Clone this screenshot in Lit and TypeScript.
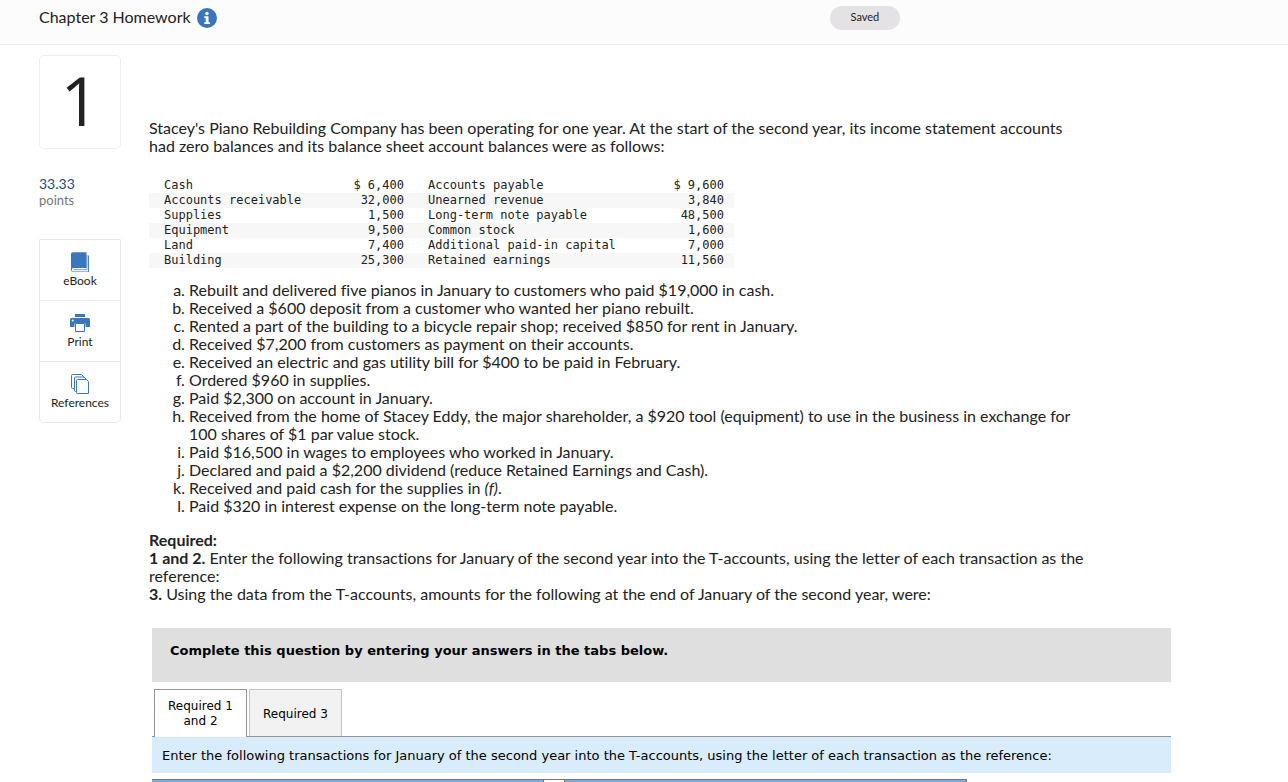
import { LitElement, html, css, svg } from "lit";
import { customElement, property, state } from "lit/decorators.js";
import { classMap } from "lit/directives/class-map.js";

const balances = [
  ["Cash", "$ 6,400", "Accounts payable", "$ 9,600"],
  ["Accounts receivable", "32,000", "Unearned revenue", "3,840"],
  ["Supplies", "1,500", "Long-term note payable", "48,500"],
  ["Equipment", "9,500", "Common stock", "1,600"],
  ["Land", "7,400", "Additional paid-in capital", "7,000"],
  ["Building", "25,300", "Retained earnings", "11,560"],
];

const events = [
  "Rebuilt and delivered five pianos in January to customers who paid $19,000 in cash.",
  "Received a $600 deposit from a customer who wanted her piano rebuilt.",
  "Rented a part of the building to a bicycle repair shop; received $850 for rent in January.",
  "Received $7,200 from customers as payment on their accounts.",
  "Received an electric and gas utility bill for $400 to be paid in February.",
  "Ordered $960 in supplies.",
  "Paid $2,300 on account in January.",
  "Received from the home of Stacey Eddy, the major shareholder, a $920 tool (equipment) to use in the business in exchange for 100 shares of $1 par value stock.",
  "Paid $16,500 in wages to employees who worked in January.",
  "Declared and paid a $2,200 dividend (reduce Retained Earnings and Cash).",
  html`Received and paid cash for the supplies in <i>(f)</i>.`,
  "Paid $320 in interest expense on the long-term note payable.",
];

const bookIcon = svg`
  <path d="M3 .2h13.500v15.800H3.200a1.800 1.800 0 0 0 0 3.500h14.800V3.500h.9v16.500H3.200A2.400 2.400 0 0 1 1 18V2.200a2 2 0 0 1 2-2z" fill="#3a76bb"/>
  <path d="M3.500 17.700h13.500V3" fill="none" stroke="#3a76bb" stroke-width=".7"/>`;
const printIcon = svg`
  <path d="M5 1h10v3H5z" fill="#3a76bb"/>
  <path d="M1.500 5h17a1.500 1.500 0 0 1 1.500 1.500V14h-4.500v-3.500h-11V14H0V6.500A1.500 1.500 0 0 1 1.500 5z" fill="#3a76bb"/>
  <circle cx="2.700" cy="7.600" r="1" fill="#fff"/>
  <path d="M5.500 10.500h9v8h-9z" fill="#fff" stroke="#3a76bb" stroke-width="1"/>`;
const referencesIcon = svg`
  <g fill="#fff" stroke="#3a76bb" stroke-width="1">
    <path d="M2.500.500h9l2 2v12h-11a1 1 0 0 1-1-1v-12a1 1 0 0 1 1-1z"/>
    <path d="M5.500 3h8.500l2 2v12.500H5.500a1 1 0 0 1-1-1V4a1 1 0 0 1 1-1z"/>
    <path d="M7.500 5.500h9l2 2v12h-11a1 1 0 0 1-1-1v-12a1 1 0 0 1 1-1z"/>
  </g>`;

@customElement("tool-rail")
export class ToolRail extends LitElement {
  static styles = css`
    :host {
      display: flex;
      flex-direction: column;
      border: 1px solid #e8e8e8;
      border-radius: 0 0 5px 5px;
    }
    .tool {
      display: flex;
      flex-direction: column;
      align-items: center;
      gap: 1px;
      height: 60px;
      padding: 12px 0 0;
      box-sizing: border-box;
      border: 0;
      background: none;
      color: #222;
      font: 12px/16px Lato, sans-serif;
      cursor: pointer;
    }
    .tool + .tool {
      height: 61px;
      border-top: 1px solid #e8e8e8;
    }
    .icon {
      display: block;
      width: 20px;
      height: 20px;
    }
  `;

  render() {
    return [
      ["eBook", bookIcon],
      ["Print", printIcon],
      ["References", referencesIcon],
    ].map(
      ([label, icon]) => html`<button class="tool" type="button">
        <svg class="icon" viewBox="0 0 20 20" aria-hidden="true">${icon}</svg>
        <span>${label}</span>
      </button>`
    );
  }
}

@customElement("answer-panel")
export class AnswerPanel extends LitElement {
  @property({ type: Array }) tabs = ["Required 1 and 2", "Required 3"];
  @state() private active = 0;

  static styles = css`
    :host {
      display: block;
      font: 13px/15px "DejaVu Sans", Verdana, sans-serif;
      color: #000;
    }
    .banner {
      margin: 0;
      padding: 15px 18px 24px;
      background: #dfdfdf;
      font-weight: bold;
    }
    .tabs {
      display: flex;
      gap: 2px;
      margin-top: 7px;
      padding: 0 2px;
      border-bottom: 1px solid #949494;
    }
    .tab {
      width: 93px;
      height: 47px;
      box-sizing: border-box;
      padding: 2px 8px 0;
      border: 1px solid #c4c4c4;
      border-bottom: 0;
      background: #f2f2f2;
      color: #000;
      font: 12px/15px "DejaVu Sans", Verdana, sans-serif;
      cursor: pointer;
    }
    .tab.active {
      height: 48px;
      margin-bottom: -1px;
      padding-top: 0;
      border-color: #949494;
      background: #fff;
    }
    .hint {
      margin: 0;
      padding: 11px 10px 10px;
      background: #d9ecfb;
    }
    .ledger {
      width: 80%;
      margin-top: 6px;
      border-collapse: collapse;
      table-layout: fixed;
      border-top: 1px solid #747474;
    }
    .account {
      height: 2px;
      padding: 0;
      background: #75abe6;
      border-right: 1px solid #747474;
    }
    .debit {
      width: 48%;
    }
    .spacer {
      width: 20px;
      padding: 0;
      border-right: 1px solid #747474;
    }
  `;

  render() {
    return html`
      <p class="banner">Complete this question by entering your answers in the tabs below.</p>
      <div class="tabs" role="tablist">
        ${this.tabs.map(
          (name, i) => html`<button
            type="button"
            role="tab"
            aria-selected=${i === this.active ? "true" : "false"}
            class=${classMap({ tab: true, active: i === this.active })}
            @click=${() => (this.active = i)}
          >${name}</button>`
        )}
      </div>
      <p class="hint">Enter the following transactions for January of the second year into the T-accounts, using the letter of each transaction as the reference:</p>
      <table class="ledger">
        <tr><td class="account debit"></td><td class="spacer"></td><td class="account"></td></tr>
      </table>
    `;
  }
}

@customElement("app-root")
export class AppRoot extends LitElement {
  static styles = css`
    :host {
      display: block;
      color: #222;
      background: #fff;
      font: 16px/18px Lato, sans-serif;
      font-variant-ligatures: none;
    }
    .bar {
      display: grid;
      grid-template-columns: 65% auto;
      align-items: center;
      height: 44px;
      padding: 0 39px;
      background: #fcfcfc;
      border-bottom: 1px solid #eee;
    }
    .heading {
      display: flex;
      align-items: center;
      gap: 6px;
      padding-bottom: 8px;
    }
    .title {
      margin: 0;
      padding-bottom: 2px;
      font-size: 16px;
      line-height: 20px;
      font-weight: normal;
    }
    .info {
      display: flex;
      padding: 0;
      border: 0;
      background: none;
      cursor: pointer;
    }
    .info svg {
      width: 20px;
      height: 20px;
    }
    .saved {
      justify-self: start;
      margin: 0 0 8px 4px;
      padding: 3px 21px 5px;
      border-radius: 12px;
      background: #e4e2e5;
      font-size: 11px;
      line-height: 16px;
    }
    .page {
      display: grid;
      grid-template-columns: 82px minmax(0, 1fr);
      gap: 28px;
      padding: 10px 117px 0 39px;
    }
    .number {
      height: 94px;
      box-sizing: border-box;
      border: 1px solid #eee;
      border-radius: 5px;
      font: 68px/88px "Open Sans", sans-serif;
      text-align: center;
    }
    .points {
      margin: 27px 0 31px;
      color: #777;
      font-size: 13px;
      line-height: 16px;
    }
    .worth {
      display: block;
      color: #1f4a7d;
      font-size: 14px;
    }
    .question {
      padding-top: 64px;
    }
    .text {
      margin: 0;
      padding-right: 83px;
    }
    .balances {
      margin: 23px 0 13px;
      border-collapse: collapse;
      font: 12px/15px "DejaVu Sans Mono", monospace;
    }
    .balances tr:nth-child(even) {
      background: #f7f7f7;
    }
    .balances td {
      padding: 0;
    }
    .balances .name {
      padding: 0 0 0 15px;
      width: 176px;
    }
    .balances .other {
      width: 232px;
      padding-left: 24px;
    }
    .amount {
      width: 64px;
      text-align: right;
      white-space: pre;
    }
    .balances .last {
      padding-right: 10px;
    }
    .events {
      margin: 0;
      padding: 0 83px 0 40px;
      list-style: lower-alpha;
    }
    .label {
      margin: 16px 0 0;
      font-size: 16px;
      line-height: 18px;
    }
    .panel {
      margin: 25px 0 0 3px;
    }
  `;

  render() {
    return html`
      <header class="bar">
        <div class="heading">
          <h1 class="title">Chapter 3 Homework</h1>
          <button class="info" type="button" aria-label="Assignment information">
            <svg viewBox="0 0 20 20" aria-hidden="true">
              <circle cx="10" cy="10" r="10" fill="#3a76bb" />
              <circle cx="10" cy="5.500" r="1.700" fill="#fff" />
              <path d="M7.300 8.300h4.200v6h1.500v1.800H7.200v-1.800h1.500v-4.200H7.300z" fill="#fff" />
            </svg>
          </button>
        </div>
        <span class="saved" role="status">Saved</span>
      </header>
      <main class="page">
        <aside>
          <div class="number">1</div>
          <div class="points"><span class="worth">33.33</span>points</div>
          <tool-rail></tool-rail>
        </aside>
        <section class="question">
          <p class="text">Stacey's Piano Rebuilding Company has been operating for one year. At the start of the second year, its income statement accounts had zero balances and its balance sheet account balances were as follows:</p>
          <table class="balances">
            <tbody>
              ${balances.map(
                ([a, b, c, d]) => html`<tr>
                  <td class="name">${a}</td>
                  <td class="amount">${b}</td>
                  <td class="other">${c}</td>
                  <td class="amount last">${d}</td>
                </tr>`
              )}
            </tbody>
          </table>
          <ol class="events">
            ${events.map((e) => html`<li>${e}</li>`)}
          </ol>
          <h2 class="label">Required:</h2>
          <p class="text"><b>1 and 2.</b> Enter the following transactions for January of the second year into the T-accounts, using the letter of each transaction as the reference:</p>
          <p class="text"><b>3.</b> Using the data from the T-accounts, amounts for the following at the end of January of the second year, were:</p>
          <answer-panel class="panel"></answer-panel>
        </section>
      </main>
    `;
  }
}
